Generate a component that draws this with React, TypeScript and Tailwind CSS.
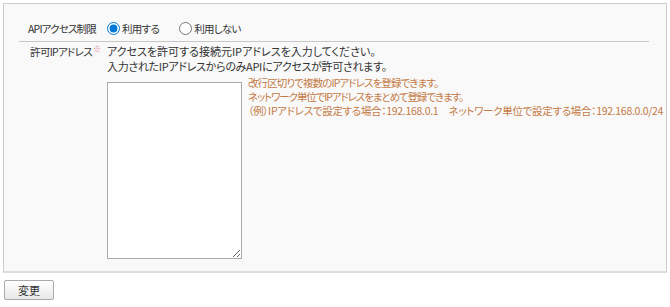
import React from "react";

export default function App() {
  return (
    <div className="w-[670px] h-[307px] bg-white pt-[3px] px-[3px] text-[11px] leading-[15px] text-[#333] [font-family:'Noto_Sans_CJK_JP','Noto_Sans',sans-serif] [font-feature-settings:'palt']">
      <div className="w-[664px] h-[270px] border border-[#cccccc] border-b-[2px] border-b-[#dddddd] bg-[#f9f9f9] pl-[15px] pr-[17px] pt-[12px]">
        <div className="flex items-center h-[26px] border-b border-[#c8c8c8]">
          <div className="w-[88px] pr-[11px] text-right shrink-0 whitespace-nowrap text-[10.5px] tracking-[-0.8px]">APIアクセス制限</div>
          <label className="flex items-center">
            <input type="radio" name="api" defaultChecked className="m-0 w-[13px] h-[13px] accent-[#0078d7]" />
            <span className="ml-[2px] text-[10.5px] tracking-[-0.7px]">利用する</span>
          </label>
          <label className="flex items-center ml-[20px]">
            <input type="radio" name="api" className="m-0 w-[13px] h-[13px]" />
            <span className="ml-[2px] text-[10.5px] tracking-[-0.7px]">利用しない</span>
          </label>
        </div>
        <div className="flex pt-[2px]">
          <div className="w-[88px] pr-[6px] text-right shrink-0 whitespace-nowrap">
            <span className="text-[10.5px] tracking-[-0.7px]">許可IPアドレス</span>
            <span className="text-[#e07c94] text-[8px] align-top relative -top-[3px] ml-[1px]">※</span>
          </div>
          <div className="flex flex-col">
            <div className="whitespace-nowrap">アクセスを許可する接続元IPアドレスを入力してください。</div>
            <div className="whitespace-nowrap tracking-[-0.3px]">入力されたIPアドレスからのみAPIにアクセスが許可されます。</div>
            <div className="flex mt-[8px]">
              <textarea className="w-[135px] h-[177px] border border-[#aaaaaa] bg-white resize-y shrink-0" />
              <div className="ml-[6px] text-[#c47a45] text-[10.5px] leading-[14px] -mt-[6px] whitespace-nowrap">
                <div className="tracking-[-0.9px]">改行区切りで複数のIPアドレスを登録できます。</div>
                <div className="tracking-[-1.1px]">ネットワーク単位でIPアドレスをまとめて登録できます。</div>
                <div className="tracking-[-0.3px]">（例）IPアドレスで設定する場合：192.168.0.1　ネットワーク単位で設定する場合：192.168.0.0/24</div>
              </div>
            </div>
          </div>
        </div>
      </div>
      <button className="mt-[7px] ml-[1px] w-[50px] h-[20px] border border-[#aaaaaa] rounded-[2px] bg-gradient-to-b from-white to-[#e8e8e8] text-[11px] text-[#333] flex items-center justify-center">
        変更
      </button>
    </div>
  );
}
